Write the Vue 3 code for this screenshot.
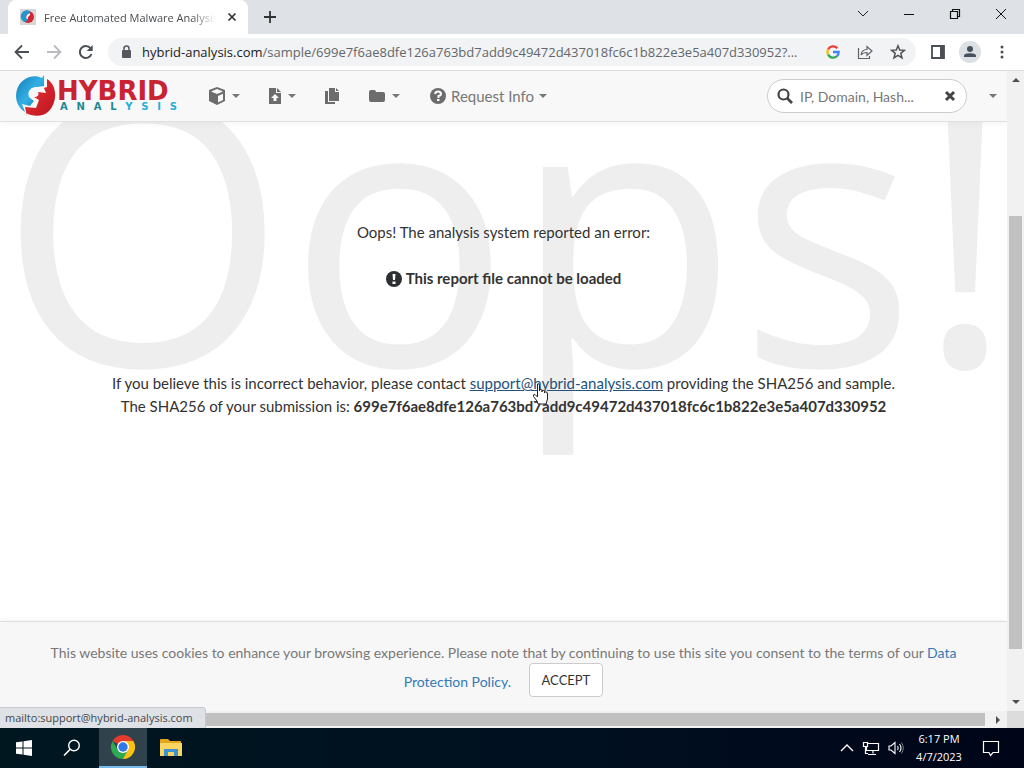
<script setup>
import { ref } from 'vue'

const query = ref('')
const address = 'hybrid-analysis.com'
const hash = '699e7f6ae8dfe126a763bd7add9c49472d437018fc6c1b822e3e5a407d330952'
</script>

<template>
  <div class="desktop">
    <header class="tabs">
      <div class="tab">
        <svg class="favicon" viewBox="0 0 16 16" width="16" height="16" aria-hidden="true">
          <rect width="16" height="16" fill="#d8d5d8" />
          <circle cx="8" cy="8" r="6" fill="#cf2732" />
          <path d="M10 2A6 6 0 0 0 4 13L7 12L8 10L6 8C6 6 8 5 9 5Z" fill="#2495cd" />
          <path d="M10 4L10 6L8 8L8 10L6 9L7 6Z" fill="#fff" />
        </svg>
        <span class="tab-title">Free Automated Malware Analysis</span>
        <button class="plain" aria-label="Close tab">
          <svg viewBox="0 0 16 16" width="16" height="16"><path d="M4.500 4.500L11.500 11.500M11.500 4.500L4.500 11.500" stroke="#333" stroke-width="1.700" /></svg>
        </button>
      </div>
      <button class="plain new-tab" aria-label="New tab">
        <svg viewBox="0 0 16 16" width="16" height="16"><path d="M8 2V14M2 8H14" stroke="#333" stroke-width="1.800" /></svg>
      </button>
      <div class="window-buttons">
        <button class="plain" aria-label="Search tabs"><svg viewBox="0 0 16 16" width="16" height="16"><path d="M3 5L8 10L13 5" fill="none" stroke="#222" /></svg></button>
        <button class="plain" aria-label="Minimize"><svg viewBox="0 0 16 16" width="16" height="16"><path d="M3 8.500H13" stroke="#111" /></svg></button>
        <button class="plain" aria-label="Restore"><svg viewBox="0 0 16 16" width="16" height="16"><path d="M3.500 5.500H10.500V12.500H3.500ZM5.500 5V3.500H12.500V10.500H11" fill="none" stroke="#111" stroke-width="1.200" /></svg></button>
        <button class="plain" aria-label="Close"><svg viewBox="0 0 16 16" width="16" height="16"><path d="M3 3L13 13M13 3L3 13" stroke="#111" /></svg></button>
      </div>
    </header>

    <div class="toolbar">
      <div class="nav-buttons">
        <button class="plain" aria-label="Back"><svg viewBox="0 0 16 16" width="16" height="16"><path d="M15 8H2M8 1.500L1.500 8L8 14.500" fill="none" stroke="#4b4f53" stroke-width="1.800" /></svg></button>
        <button class="plain" aria-label="Forward"><svg viewBox="0 0 16 16" width="16" height="16"><path d="M1 8H14M8 1.500L14.500 8L8 14.500" fill="none" stroke="#b9bbbe" stroke-width="1.800" /></svg></button>
        <button class="plain" aria-label="Reload"><svg viewBox="0 0 16 16" width="16" height="16"><path d="M13.500 10A6 6 0 1 1 12.500 4.200" fill="none" stroke="#4b4f53" stroke-width="2" /><path d="M14.700 1V7H8.700Z" fill="#4b4f53" /></svg></button>
      </div>
      <div class="address">
        <svg viewBox="0 0 12 14" width="12" height="14" aria-hidden="true"><rect x="2" y="5" width="9" height="8" rx="1" fill="#55595d" /><path d="M4 6V3.500A2.500 2.500 0 0 1 9 3.500V6" fill="none" stroke="#55595d" stroke-width="1.500" /></svg>
        <p class="url"><b>{{ address }}</b>/sample/{{ hash }}?...</p>
        <div class="address-actions">
          <svg viewBox="0 0 16 16" width="14" height="14" aria-label="Google">
            <path d="M13 3.700A6.500 6.500 0 0 0 2.400 5" fill="none" stroke="#ea4335" stroke-width="2.600" />
            <path d="M2.400 5A6.500 6.500 0 0 0 2.400 11" fill="none" stroke="#fbbc05" stroke-width="2.600" />
            <path d="M2.400 11A6.500 6.500 0 0 0 12.500 12.800" fill="none" stroke="#34a853" stroke-width="2.600" />
            <path d="M12.500 12.800A6.500 6.500 0 0 0 14.500 8H8" fill="none" stroke="#4285f4" stroke-width="2.600" />
          </svg>
          <button class="plain" aria-label="Share"><svg viewBox="0 0 16 16" width="16" height="16"><path d="M1.500 4V14.500H12.500V12M4 11C4.500 7.500 7 5.500 10 5.500V2.500L15 7L10 11.500V8.500C7.500 8.500 5.500 9 4 11Z" fill="none" stroke="#5f6368" stroke-width="1.200" /></svg></button>
          <button class="plain" aria-label="Bookmark"><svg viewBox="0 0 16 16" width="16" height="16"><path d="M8 1.800L9.700 6L14.400 6.300L10.800 9.300L12 13.900L8 11.400L4 13.900L5.200 9.300L1.600 6.300L6.300 6Z" fill="none" stroke="#505458" stroke-width="1.500" /></svg></button>
        </div>
      </div>
      <div class="profile">
        <button class="plain" aria-label="Side panel"><svg viewBox="0 0 16 16" width="16" height="16"><path d="M2 2H14V14H2Z" fill="none" stroke="#4b4f53" stroke-width="1.800" /><path d="M10 2H14V14H10Z" fill="#4b4f53" /></svg></button>
        <button class="plain" aria-label="Profile"><svg viewBox="0 0 22 22" width="22" height="22"><circle cx="11" cy="11" r="11" fill="#dcdfe3" /><circle cx="11" cy="8" r="3" fill="#46515f" /><path d="M5 16V14.500C5 11.500 17 11.500 17 14.500V16Z" fill="#46515f" /></svg></button>
        <button class="plain" aria-label="Menu"><svg viewBox="0 0 16 16" width="16" height="16" fill="#4b4f53"><circle cx="8" cy="3" r="1.500" /><circle cx="8" cy="8" r="1.500" /><circle cx="8" cy="13" r="1.500" /></svg></button>
      </div>
    </div>

    <div class="viewport">
      <div class="page">
        <nav class="site-nav">
          <a class="logo" href="#">
            <svg viewBox="0 0 40 42" width="40" height="42" aria-hidden="true">
              <defs>
                <linearGradient id="blue" x1="0" y1="0" x2="1" y2="1"><stop offset="0" stop-color="#1478b5" /><stop offset="0.500" stop-color="#32b0e4" /><stop offset="1" stop-color="#1675b7" /></linearGradient>
                <linearGradient id="red" x1="0" y1="0" x2="1" y2="1"><stop offset="0" stop-color="#f0343b" /><stop offset="1" stop-color="#b8151e" /></linearGradient>
              </defs>
              <path d="M28 0V11L21 12C14 11 10 19 14 23L18 26L14 31L6 29L9 37C0 31-2 21 2 12C7 2 18-1 26 3Z" fill="url(#blue)" />
              <path d="M31 4C41 10 42 26 33 36C27 42 17 42 10 38L11 42L9 32L20 33L23 25L18 22C23 22 23 19 22 17L30 18L28 13L31 12Z" fill="url(#red)" />
            </svg>
            <span class="wordmark">
              <span class="brand">HYBRID</span>
              <span class="brand-sub"><span v-for="(letter, i) in 'ANALYSIS'" :key="i">{{ letter }}</span></span>
            </span>
          </a>
          <div class="menus">
            <button class="menu" aria-label="Sandbox">
              <svg viewBox="0 0 18 18" width="18" height="18"><path fill="#6c6c6c" fill-rule="evenodd" d="M9 0L17 3V14L9 18L1 14V3ZM9 2L3 4.500L9 7L15 4.500ZM10 9V15.500L15 13V6.800Z" /></svg><i class="caret"></i>
            </button>
            <button class="menu" aria-label="Submissions">
              <svg viewBox="0 0 14 18" width="14" height="18"><path fill="#6c6c6c" fill-rule="evenodd" d="M1 1H8V6H13V17H1ZM7 7L3 11H5.500V14H8.500V11H11Z" /><path d="M9 1L13 5H9Z" fill="#6c6c6c" /></svg><i class="caret"></i>
            </button>
            <button class="menu" aria-label="Copy">
              <svg viewBox="0 0 16 18" width="16" height="18" fill="#6c6c6c"><path d="M5 1H11V5H15V14H5ZM12 1L15 4H12Z" /><path d="M1 4H4V15H11V17H1Z" /></svg>
            </button>
            <button class="menu" aria-label="Folders">
              <svg viewBox="0 0 18 18" width="18" height="18"><path d="M1 5Q1 3 3 3H6Q8 3 8 5H15Q17 5 17 7V13Q17 15 15 15H3Q1 15 1 13Z" fill="#6c6c6c" /></svg><i class="caret"></i>
            </button>
            <button class="menu request">
              <svg viewBox="0 0 16 16" width="16" height="16"><circle cx="8" cy="8" r="8" fill="#6c6c6c" /><path d="M5 6Q5.500 3.500 8 3.500Q11 3.500 11 6Q11 7.500 8.500 8V10" fill="none" stroke="#fafafa" stroke-width="2" /><rect x="7" y="11" width="2.500" height="2" fill="#fafafa" /></svg><span>Request Info</span><i class="caret"></i>
            </button>
          </div>
          <form class="search" @submit.prevent>
            <svg viewBox="0 0 16 16" width="16" height="16" aria-hidden="true"><circle cx="6.500" cy="6.500" r="5" fill="none" stroke="#444" stroke-width="2.200" /><path d="M10 10L15 15" stroke="#444" stroke-width="2.600" /></svg>
            <input v-model="query" aria-label="Search" placeholder="IP, Domain, Hash...">
            <button type="reset" class="plain" aria-label="Clear"><svg viewBox="0 0 12 12" width="12" height="12"><path d="M2 2L10 10M10 2L2 10" stroke="#444" stroke-width="3" /></svg></button>
          </form>
          <button class="menu more" aria-label="More"><i class="caret"></i></button>
        </nav>

        <main class="report">
          <div class="watermark" aria-hidden="true">Oops!</div>
          <p>Oops! The analysis system reported an error:</p>
          <p class="error">
            <svg viewBox="0 0 16 16" width="16" height="16" aria-hidden="true"><circle cx="8" cy="8" r="8" fill="#2c3032" /><path d="M6.500 3H9.500L9 9H7Z" fill="#fff" /><rect x="6.500" y="10.500" width="3" height="2.500" fill="#fff" /></svg>
            This report file cannot be loaded
          </p>
          <p class="contact">If you believe this is incorrect behavior, please contact <a href="mailto:support@hybrid-analysis.com">support@hybrid-analysis.com</a> providing the SHA256 and sample.</p>
          <p class="submission">The SHA256 of your submission is: <strong>{{ hash }}</strong></p>
          <svg class="pointer" viewBox="0 0 18 24" width="18" height="24" aria-hidden="true"><path d="M5.500 2Q7 1 7.500 3V9V7.500Q9.500 6.500 10 8.500V10V8.500Q12 7.500 12.500 9.500V11V10Q15.500 9 15.500 12V17L14 22H6L5 19L1.500 14.500Q1 12 3 12.500L5.500 15Z" fill="#fff" stroke="#222" /></svg>
        </main>

        <section class="cookies">
          <p>This website uses cookies to enhance your browsing experience. Please note that by continuing to use this site you consent to the terms of our <a href="#">Data Protection Policy.</a> <button class="accept">ACCEPT</button></p>
        </section>
      </div>
      <div class="scroll-v"><i class="arrow up"></i><div class="track"><div class="thumb"></div></div><i class="arrow down"></i></div>
      <div class="scroll-h"><div class="thumb-h"></div><i class="arrow right"></i></div>
      <div class="corner"></div>
      <div class="status">mailto:support@hybrid-analysis.com</div>
    </div>

    <footer class="taskbar">
      <button class="task" aria-label="Start"><svg viewBox="0 0 16 16" width="16" height="16" fill="#fff"><path d="M0 2.300L6.500 1.400V7.500H0ZM7.500 1.200L16 0V7.500H7.500ZM0 8.500H6.500V14.600L0 13.700ZM7.500 8.500H16V16L7.500 14.800Z" /></svg></button>
      <button class="task" aria-label="Search"><svg viewBox="0 0 18 18" width="18" height="18"><circle cx="11" cy="6.500" r="5.300" fill="none" stroke="#fff" stroke-width="1.400" /><path d="M7.200 10.200L1 16.500" stroke="#fff" stroke-width="1.600" /></svg></button>
      <button class="task active" aria-label="Chrome"><svg viewBox="0 0 24 24" width="24" height="24"><path d="M12 12L1.600 6A12 12 0 0 1 22.400 6Z" fill="#e33b2e" /><path d="M12 6H22.400A12 12 0 0 1 12 24L12 18Z" fill="#fbc116" /><path d="M1.600 6L7 15L12 18L17 15L12 24A12 12 0 0 1 1.600 6Z" fill="#2da94f" /><circle cx="12" cy="12" r="6" fill="#fff" /><circle cx="12" cy="12" r="4.700" fill="#3378e8" /></svg></button>
      <button class="task" aria-label="File Explorer"><svg viewBox="0 0 22 18" width="22" height="18"><path d="M0 1Q0 0 1 0H8L10 2H21V17H0Z" fill="#e3a51c" /><path d="M0 4H22V17H0Z" fill="#fcd462" /><path d="M4 17V10H18V17H14V13H8V17Z" fill="#3e92cd" /></svg></button>
      <div class="tray">
        <svg viewBox="0 0 14 10" width="14" height="10" aria-hidden="true"><path d="M1 8L7 2L13 8" fill="none" stroke="#fff" stroke-width="1.400" /></svg>
        <svg viewBox="0 0 18 16" width="18" height="16" aria-hidden="true"><path d="M6 3.500H16.500V10.500H4.500V6M11 11V13.500M6 14.500H14M1.500 2.500H5.500V6.500H1.500ZM3.500 7V13.500H6" fill="none" stroke="#fff" stroke-width="1.200" /></svg>
        <svg viewBox="0 0 16 14" width="16" height="14" aria-hidden="true"><path d="M1 5H3L7 1.500V12.500L3 9H1ZM9.500 5Q11 7 9.500 9M11.500 3Q14.500 7 11.500 11" fill="none" stroke="#fff" stroke-width="1.100" /><path d="M13.500 1.500Q17 7 13.500 12.500" fill="none" stroke="#7b838c" /></svg>
        <div class="clock"><span>6:17 PM</span><span>4/7/2023</span></div>
        <svg viewBox="0 0 18 18" width="18" height="18" aria-hidden="true"><path d="M1.500 2.500H16.500V13.500H11L8.500 16.500L7 13.500H1.500Z" fill="none" stroke="#fff" stroke-width="1.200" /></svg>
      </div>
    </footer>
  </div>
</template>

<style>
body { margin: 0; }
</style>

<style scoped>
* { box-sizing: border-box; }
p { margin: 0; }
svg { display: block; flex: none; }
button { font-family: inherit; cursor: pointer; }
.desktop { height: 100vh; display: flex; flex-direction: column; overflow: hidden; font-family: "Open Sans", "Noto Sans", sans-serif; font-size: 11px; color: #3c4043; }
.plain { border: 0; padding: 0; background: none; display: flex; align-items: center; justify-content: center; }
.tabs { flex: none; height: 34px; display: flex; align-items: center; background: #dee1e6; padding-left: 8px; }
.tab { width: 240px; height: 34px; display: flex; align-items: center; padding: 0 8px 0 12px; background: #fff; border-radius: 8px 8px 0 0; }
.tab-title { flex: 1; min-width: 0; margin: 0 8px; overflow: hidden; white-space: nowrap; color: #4a4d50; mask-image: linear-gradient(to right, #000 86%, transparent); }
.new-tab { margin-left: 14px; }
.window-buttons { margin-left: auto; display: flex; padding-bottom: 6px; }
.window-buttons button { width: 46px; height: 28px; }
.toolbar { flex: none; height: 37px; display: flex; align-items: center; background: #fff; border-bottom: 1px solid #dcdcdc; }
.nav-buttons { display: flex; gap: 16px; padding: 0 14px; }
.address { flex: 1; min-width: 0; height: 28px; display: flex; align-items: center; gap: 10px; padding: 0 10px 0 12px; border-radius: 14px; background: #f1f3f4; }
.url { flex: 1; min-width: 0; overflow: hidden; white-space: nowrap; font-size: 13px; color: #63676b; }
.url b { font-weight: 400; color: #202124; }
.address-actions { display: flex; align-items: center; gap: 17px; }
.profile { display: flex; align-items: center; gap: 13px; padding: 0 14px; }
.viewport { flex: 1; min-height: 0; position: relative; display: grid; grid-template-columns: 1fr 17px; grid-template-rows: 1fr 17px; }
.page { min-height: 0; display: flex; flex-direction: column; background: #fff; overflow: hidden; font-family: Lato, sans-serif; font-size: 15px; color: #333; }
.site-nav { flex: none; height: 51px; position: relative; z-index: 1; display: flex; align-items: center; padding-left: 16px; background: #f8f8f8; border-bottom: 1px solid #e0e0e0; box-shadow: 0 1px 8px #0000000c; }
.logo { display: flex; align-items: center; text-decoration: none; font-family: "DejaVu Sans", sans-serif; font-weight: 700; }
.wordmark { width: 122px; display: flex; flex-direction: column; padding-left: 1px; }
.brand { font-size: 26px; line-height: 22px; color: #c92332; }
.brand-sub { display: flex; justify-content: space-between; padding: 0 1px 0 3px; font-size: 10px; line-height: 10px; color: #1b8a92; }
.brand-sub span:nth-child(n+5) { color: #24aeda; }
.menus { display: flex; align-items: center; gap: 28px; margin-left: 30px; }
.menu { display: flex; align-items: center; gap: 6px; padding: 0; border: 0; background: none; color: #777; font-size: 15px; }
.request { gap: 5px; margin-left: 2px; }
.caret { border: 4px solid transparent; border-top-color: #777; border-bottom: 0; }
.search { width: 200px; height: 34px; margin-left: auto; display: flex; align-items: center; gap: 7px; padding: 0 10px 0 9px; border: 1px solid #ccc; border-radius: 17px; background: #fff; }
.search input { flex: 1; min-width: 0; padding: 0; border: 0; outline: 0; background: none; font: 14px Lato, sans-serif; }
.search input::placeholder { color: #777; opacity: 1; }
.more { margin: 0 10px 0 22px; }
.report { flex: 1; min-height: 0; position: relative; padding-top: 99px; text-align: center; line-height: 23px; }
.report > p { position: relative; }
.watermark { position: absolute; left: -2px; top: -86px; font-family: "Open Sans", sans-serif; font-size: 372px; line-height: 372px; color: #eee; white-space: nowrap; }
.error { display: flex; justify-content: center; align-items: center; gap: 4px; margin-top: 23px; font-weight: 700; }
.contact { margin-top: 82px; }
.contact a { color: #23527c; }
.pointer { position: absolute; left: 532px; top: 260px; }
.cookies { flex: none; height: 90px; padding: 17px 32px 0; background: #f7f7f7; border-top: 1px solid #ddd; box-shadow: 0 0 6px #00000010; text-align: center; line-height: 28px; color: #777; font-size: 14px; }
.cookies a { color: #337ab7; text-decoration: none; }
.accept { height: 34px; margin: -4px 0 -4px 14px; padding: 0 12px; vertical-align: 2px; border: 1px solid #ccc; border-radius: 4px; background: #fff; color: #333; font-size: 13px; }
.scroll-v { display: flex; flex-direction: column; align-items: center; padding: 7px 0; background: #f1f1f1; }
.track { flex: 1; align-self: stretch; padding: 0 2px; margin: 4px 0; }
.thumb { height: 71%; margin-top: 130px; background: #c1c1c1; }
.scroll-h { display: flex; align-items: center; background: #f1f1f1; padding-right: 7px; }
.thumb-h { flex: 1; height: 13px; margin-right: 11px; background: #c1c1c1; }
.corner { background: #dcdcdc; }
.arrow { border: 4px solid transparent; }
.up { border-top: 0; border-bottom-color: #505050; }
.down { border-bottom: 0; border-top-color: #505050; }
.right { border-right: 0; border-left-color: #505050; }
.status { position: absolute; left: 0; bottom: 0; height: 21px; padding: 0 12px 0 5px; border: 1px solid #c6c8cb; border-width: 1px 1px 0 0; border-radius: 0 4px 0 0; background: #dee1e6; line-height: 20px; color: #45484c; }
.taskbar { flex: none; height: 40px; display: flex; background: linear-gradient(90deg, #001720, #000f20 60%, #000518); color: #fff; }
.task { width: 48px; display: flex; align-items: center; justify-content: center; padding: 0; border: 0; background: none; }
.active { margin-left: 3px; background: #30434d; border-bottom: 2px solid #76b9ed; }
.tray { margin-left: auto; display: flex; align-items: center; gap: 8px; padding-right: 24px; }
.clock { width: 54px; margin-right: 8px; display: flex; flex-direction: column; align-items: center; line-height: 18px; white-space: nowrap; }
</style>
